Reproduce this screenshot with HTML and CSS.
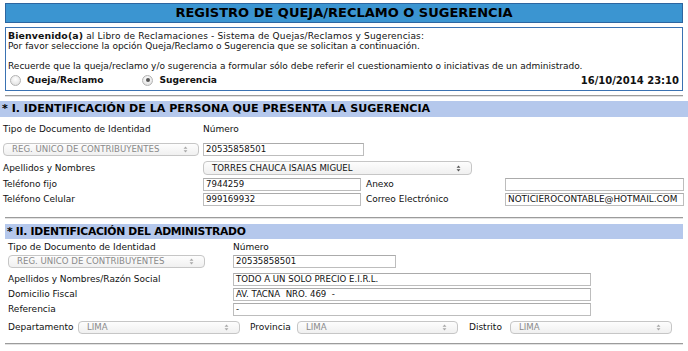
FILE: index.html
```html
<!DOCTYPE html>
<html lang="es">
<head>
<meta charset="utf-8">
<title>Registro de Queja/Reclamo o Sugerencia</title>
<link rel="stylesheet" href="styles.css">
</head>
<body>
<div class="page">
  <div class="title">REGISTRO DE QUEJA/RECLAMO O SUGERENCIA</div>

  <div class="intro">
    <p class="line first"><b>Bienvenido(a)</b> al Libro de Reclamaciones - Sistema de Quejas/Reclamos y Sugerencias:</p>
    <p class="line">Por favor seleccione la opción Queja/Reclamo o Sugerencia que se solicitan a continuación.</p>
    <p class="line blank">&nbsp;</p>
    <p class="line">Recuerde que la queja/reclamo y/o sugerencia a formular sólo debe referir el cuestionamiento o iniciativas de un administrado.</p>
    <div class="choice-row">
      <label class="choice"><span class="radio"></span><b>Queja/Reclamo</b></label>
      <label class="choice second"><span class="radio checked"></span><b>Sugerencia</b></label>
      <b class="date">16/10/2014 23:10</b>
    </div>
  </div>

  <div class="rule r1"></div>

  <div class="band band1">* I. IDENTIFICACIÓN DE LA PERSONA QUE PRESENTA LA SUGERENCIA</div>

  <div class="sec1">
    <div class="row m6">
      <span class="lab w200">Tipo de Documento de Identidad</span>
      <span class="lab">Número</span>
    </div>
    <div class="row m7">
      <div class="select dis w196">REG. UNICO DE CONTRIBUYENTES<svg class="arr" viewBox="0 0 6 9"><path d="M0.5 3.5 L3 0.5 L5.5 3.5 Z M0.5 5.5 L3 8.5 L5.5 5.5 Z"/></svg></div>
      <div class="input w161 ml4">20535858501</div>
    </div>
    <div class="row m5 h14">
      <span class="lab w200">Apellidos y Nombres</span>
      <div class="select w269">TORRES CHAUCA ISAIAS MIGUEL<svg class="arr dark" viewBox="0 0 6 9"><path d="M0.5 3.5 L3 0.5 L5.5 3.5 Z M0.5 5.5 L3 8.5 L5.5 5.5 Z"/></svg></div>
    </div>
    <div class="row m3">
      <span class="lab w200">Teléfono fijo</span>
      <div class="input w158">7944259</div>
      <span class="lab w139 pl5">Anexo</span>
      <div class="input w179"></div>
    </div>
    <div class="row m2">
      <span class="lab w200">Teléfono Celular</span>
      <div class="input w158">999169932</div>
      <span class="lab w139 pl5">Correo Electrónico</span>
      <div class="input w179 mail">NOTICIEROCONTABLE@HOTMAIL.COM</div>
    </div>
  </div>

  <div class="rule r2"></div>

  <div class="band band2">* II. IDENTIFICACIÓN DEL ADMINISTRADO</div>

  <div class="sec2">
    <div class="row m2">
      <span class="lab w225">Tipo de Documento de Identidad</span>
      <span class="lab">Número</span>
    </div>
    <div class="row m1">
      <div class="select dis w197">REG. UNICO DE CONTRIBUYENTES<svg class="arr" viewBox="0 0 6 9"><path d="M0.5 3.5 L3 0.5 L5.5 3.5 Z M0.5 5.5 L3 8.5 L5.5 5.5 Z"/></svg></div>
      <div class="input w163 ml28">20535858501</div>
    </div>
    <div class="row m5">
      <span class="lab w225">Apellidos y Nombres/Razón Social</span>
      <div class="input w358">TODO A UN SOLO PRECIO E.I.R.L.</div>
    </div>
    <div class="row m2">
      <span class="lab w225">Domicilio Fiscal</span>
      <div class="input w358">AV. TACNA&nbsp; NRO. 469&nbsp; -</div>
    </div>
    <div class="row m2">
      <span class="lab w225">Referencia</span>
      <div class="input w358">-</div>
    </div>
    <div class="row m5">
      <span class="lab w70">Departamento</span>
      <div class="select dis w162">LIMA<svg class="arr" viewBox="0 0 6 9"><path d="M0.5 3.5 L3 0.5 L5.5 3.5 Z M0.5 5.5 L3 8.5 L5.5 5.5 Z"/></svg></div>
      <span class="lab w57 pl10">Provincia</span>
      <div class="select dis w161">LIMA<svg class="arr" viewBox="0 0 6 9"><path d="M0.5 3.5 L3 0.5 L5.5 3.5 Z M0.5 5.5 L3 8.5 L5.5 5.5 Z"/></svg></div>
      <span class="lab w52 pl11">Distrito</span>
      <div class="select dis w162">LIMA<svg class="arr" viewBox="0 0 6 9"><path d="M0.5 3.5 L3 0.5 L5.5 3.5 Z M0.5 5.5 L3 8.5 L5.5 5.5 Z"/></svg></div>
    </div>
  </div>

  <div class="rule r3"></div>
</div>
</body>
</html>
```

FILE: styles.css
```css
* { box-sizing: border-box; }
html, body { margin: 0; padding: 0; background: #fff; }
body {
  font-family: "DejaVu Sans", Verdana, sans-serif;
  font-size: 9px;
  color: #111;
  overflow: hidden;
}
.page { padding: 3px 5px 0 5px; width: 688px; }

.title {
  height: 20px;
  border: 1px solid #2d66a0;
  background: #3b95d1;
  text-align: center;
  font-weight: bold;
  font-size: 13px;
  line-height: 18px;
  color: #000;
}

.intro {
  margin-top: 4px;
  height: 64px;
  border: 1px solid #3a72b2;
  padding: 3px 2px 0 2px;
}
.line { margin: 0; line-height: 10px; white-space: nowrap; }
.line.first { letter-spacing: 0.17px; }
.line.first b { font-size: 9.4px; letter-spacing: 0.1px; }
.choice-row {
  display: flex;
  align-items: center;
  height: 14px;
  margin-top: 2px;
}
.choice { display: flex; align-items: center; gap: 6px; font-size: 9.1px; }
.choice.second { margin-left: 37px; }
.radio {
  width: 11px; height: 11px;
  border-radius: 50%;
  border: 1px solid #b3b3b3;
  background: radial-gradient(circle at 50% 35%, #ffffff 0%, #e6e6e6 70%, #d4d4d4 100%);
  display: inline-flex; align-items: center; justify-content: center;
  margin-left: 2px;
}
.radio.checked::after {
  content: "";
  width: 4px; height: 4px;
  border-radius: 50%;
  background: #555;
}
.date { margin-left: auto; font-size: 10px; margin-right: 1px; }

.rule {
  height: 2px;
  border-top: 1px solid #9c9c9c;
  border-bottom: 1px solid #e2e2e2;
}
.r1 { margin-top: 4px; }
.r2 { margin-top: 11px; }
.r3 { margin-top: 9px; }

.band {
  background: #b5c8ec;
  font-weight: bold;
  color: #000;
  white-space: nowrap;
}
.band1 { margin: 4px -5px 0 -5px; height: 16px; line-height: 16px; padding-left: 2px; font-size: 11.1px; }
.band2 { margin-top: 5px; height: 15px; line-height: 15px; padding-left: 2px; font-size: 10.8px; letter-spacing: -0.3px; }

.sec1 { margin-left: -2px; }
.sec2 { margin-left: 3px; }

.row { display: flex; align-items: center; height: 13px; }
.h14 { height: 14px; }
.m1 { margin-top: 1px; }
.m2 { margin-top: 2px; }
.m3 { margin-top: 3px; }
.m5 { margin-top: 5px; }
.m6 { margin-top: 6px; }
.m7 { margin-top: 7px; }

.lab { white-space: nowrap; line-height: 13px; flex: none; }
.w200 { width: 200px; }
.w225 { width: 225px; }
.w139 { width: 144px; }
.w70 { width: 70px; }
.w57 { width: 57px; }
.w52 { width: 52px; }
.pl5 { padding-left: 5px; }
.pl10 { padding-left: 10px; }
.pl11 { padding-left: 11px; }
.ml4 { margin-left: 4px; }
.ml28 { margin-left: 28px; }

.input {
  flex: none;
  height: 13px;
  border: 1px solid #bdbdbd;
  border-top-color: #ababab;
  background: #fff;
  font-size: 8.6px;
  line-height: 11px;
  padding-left: 2px;
  color: #111;
  white-space: nowrap;
  overflow: hidden;
}
.input.mail { font-size: 8.9px; }
.w161 { width: 161px; }
.w158 { width: 158px; }
.w179 { width: 179px; }
.w163 { width: 163px; }
.w358 { width: 358px; }

.select {
  flex: none;
  position: relative;
  height: 13px;
  border: 1px solid #c6c6c6;
  border-radius: 4px;
  background: linear-gradient(#fdfdfd, #f0f0f0);
  font-size: 8.6px;
  line-height: 11px;
  padding-left: 8px;
  color: #111;
  white-space: nowrap;
}
.select.dis { color: #8a8a8a; }
.h14 .select { height: 14px; line-height: 12px; }
.w196 { width: 196px; }
.w197 { width: 197px; }
.w269 { width: 269px; }
.w162 { width: 162px; }
.arr {
  position: absolute;
  right: 10px;
  top: 50%;
  width: 5px;
  height: 7px;
  margin-top: -3.5px;
  fill: #a8a8a8;
}
.arr.dark { fill: #555; }
```
